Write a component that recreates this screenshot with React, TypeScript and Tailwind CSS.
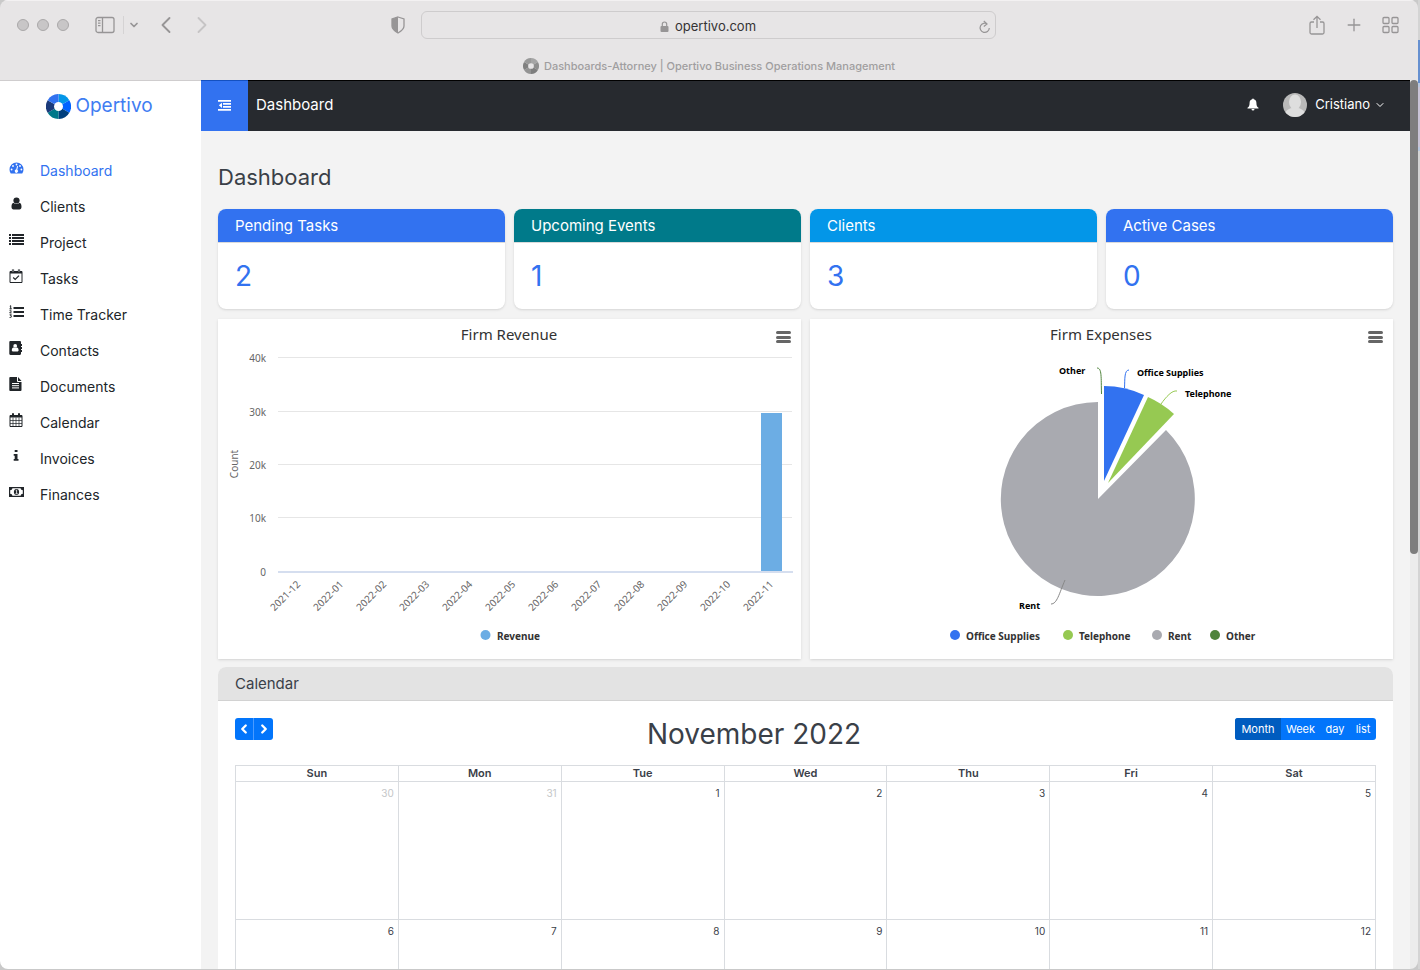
import React from 'react';
import { ChevronDown, ChevronLeft, ChevronRight, Plus } from 'lucide-react';

const BLUE = '#3272f0';

const icons: Record<string, React.ReactNode> = {
  dashboard: (
    <>
      <path fill="currentColor" d="M7.5 1.5a7 7 0 0 0-7 7c0 1.4.4 2.7 1.1 3.800.2.2.3.2.5.2h10.800c.2 0 .4 0 .5-.2.7-1.100 1.100-2.400 1.100-3.800a7 7 0 0 0-7-7z" />
      <g fill="#fff">
        <circle cx="2.600" cy="8.500" r=".9" />
        <circle cx="4" cy="5" r=".9" />
        <circle cx="7.500" cy="3.500" r=".9" />
        <circle cx="11" cy="5" r=".9" />
        <circle cx="12.400" cy="8.500" r=".9" />
        <path d="M8.100 5l1 .2-.8 3.600a1.600 1.600 0 1 1-1.100-.2z" />
      </g>
    </>
  ),
  clients: (
    <g fill="currentColor">
      <circle cx="7.500" cy="3.500" r="3.100" />
      <path d="M4.500 5.700c-1.300.4-2 1.800-2 4.100 0 1.800.8 2.700 2.100 2.700h5.800c1.300 0 2.100-.9 2.100-2.700 0-2.300-.7-3.700-2-4.100a4.100 4.100 0 0 1-6 0z" />
    </g>
  ),
  project: (
    <path fill="currentColor" d="M0 1h2v2H0zM3 1h12v2H3zM0 4h2v2H0zM3 4h12v2H3zM0 7h2v2H0zM3 7h12v2H3zM0 10h2v2H0zM3 10h12v2H3z" />
  ),
  tasks: (
    <g fill="none" stroke="currentColor">
      <path d="M1 2.500h12v11H1z" />
      <path d="M1 3.500h12" strokeWidth="2" />
      <path d="M4 .5v3M10 .5v3" strokeWidth="2.200" />
      <path d="M4 .9v2.200M10 .9v2.200" stroke="#fff" strokeWidth=".6" />
      <path d="M4.200 8.500l2 2 3.800-3.800" strokeWidth="1.200" />
    </g>
  ),
  time: (
    <g fill="none" stroke="currentColor">
      <path d="M4.500 3H15M4.500 7H15M4.500 11H15" strokeWidth="2" />
      <path d="M.8 1.200l.9-.5v3M.5 3.800h2.300M.6 5.600c.8-.6 1.800-.2 1.600.6C2 6.800.8 7.200.7 7.900h1.900M.6 9.800h1.800L1.500 11c1.500 0 1.400 1.900-.9 1.500" strokeWidth="1" />
    </g>
  ),
  contacts: (
    <>
      <path fill="currentColor" d="M1.500 0h9.300c.7 0 1.200.5 1.200 1.200V3h1v2h-1v1h1v2h-1v1h1v2h-1v1.800c0 .7-.5 1.200-1.200 1.200H1.500C.8 14 .3 13.500.3 12.800V1.200C.3.500.8 0 1.500 0z" />
      <circle cx="6.200" cy="4.900" r="1.900" fill="#fff" />
      <path fill="#fff" d="M4.700 6.400c-1.200.2-1.900 1-1.900 3.200 0 .5.300.8.900.8h5c.6 0 .9-.3.900-.8 0-2.200-.7-3-1.900-3.200a2.500 2.500 0 0 1-3 0z" />
    </>
  ),
  documents: (
    <>
      <path fill="currentColor" d="M1.200 0H8v4.200c0 .5.300.8.800.8H12.500v8c0 .6-.3 1-.9 1H1.200c-.6 0-.9-.4-.9-1V1c0-.6.300-1 .9-1zM9 0l3.500 4H9z" />
      <path stroke="#fff" d="M3 6.500h7M3 8.700h7M3 10.900h7" />
    </>
  ),
  calendar: (
    <g fill="none" stroke="currentColor">
      <path d="M1 2.500h12v11H1z" />
      <path d="M1 3.500h12" strokeWidth="2" />
      <path d="M4 .3v3M10 .3v3" strokeWidth="2" />
      <path d="M4 4.500v9M7 4.500v9M10 4.500v9M1 7.500h12M1 10.500h12" strokeWidth=".7" />
    </g>
  ),
  invoices: (
    <path fill="currentColor" d="M5.700 1h2.800v2H5.700zM4.700 5h3.800v5h1v1.800H4.700V10h1V6.700h-1z" />
  ),
  finances: (
    <g fill="none" stroke="currentColor">
      <path d="M.6 2.600h13.800v8.800H.6z" strokeWidth="1.200" />
      <path fill="currentColor" stroke="none" d="M1 3h2.500A2.500 2.500 0 0 1 1 5.300zM14 3h-2.500A2.500 2.500 0 0 0 14 5.300zM1 11h2.500A2.500 2.500 0 0 0 1 8.700zM14 11h-2.500A2.500 2.500 0 0 1 14 8.700z" />
      <ellipse cx="7.500" cy="7" rx="2.600" ry="3" fill="currentColor" stroke="none" />
      <path stroke="#fff" d="M6.800 5.500l.8-.4v3.400M6.500 8.700h2.200" strokeWidth=".8" />
    </g>
  ),
};

const menu = [
  { label: 'Dashboard', icon: 'dashboard', active: true },
  { label: 'Clients', icon: 'clients' },
  { label: 'Project', icon: 'project' },
  { label: 'Tasks', icon: 'tasks' },
  { label: 'Time Tracker', icon: 'time' },
  { label: 'Contacts', icon: 'contacts' },
  { label: 'Documents', icon: 'documents' },
  { label: 'Calendar', icon: 'calendar' },
  { label: 'Invoices', icon: 'invoices' },
  { label: 'Finances', icon: 'finances' },
];

const stats = [
  { label: 'Pending Tasks', value: 2, color: 'bg-[#3272f0]' },
  { label: 'Upcoming Events', value: 1, color: 'bg-[#007a8a]' },
  { label: 'Clients', value: 3, color: 'bg-[#0396e8]' },
  { label: 'Active Cases', value: 0, color: 'bg-[#3272f0]' },
];

const months = ['2021-12', '2022-01', '2022-02', '2022-03', '2022-04', '2022-05', '2022-06', '2022-07', '2022-08', '2022-09', '2022-10', '2022-11'];
const ticks = [
  { label: '40k', y: 39 },
  { label: '30k', y: 93 },
  { label: '20k', y: 146 },
  { label: '10k', y: 199 },
];

const legend = [
  { label: 'Office Supplies', x: 145, color: BLUE },
  { label: 'Telephone', x: 258, color: '#96c952' },
  { label: 'Rent', x: 347, color: '#a9aab0' },
  { label: 'Other', x: 405, color: '#4f843c' },
];

const days = ['Sun', 'Mon', 'Tue', 'Wed', 'Thu', 'Fri', 'Sat'];
const weeks = [
  [30, 31, 1, 2, 3, 4, 5],
  [6, 7, 8, 9, 10, 11, 12],
];

const wheelColors = ['#0396e8', '#0062ff', '#003f7d', '#00788a', '#1b3a7a', '#3272f0'];
const greys = ['#a5a5a5', '#8e8e8e', '#7e7e7e', '#939393', '#808080', '#999'];

const Wheel = ({ size, colors }: { size: number; colors: string[] }) => (
  <svg width={size} height={size} viewBox="0 0 24 24" className="shrink-0">
    {colors.map((color, i) => (
      <path key={color} d="M12 12V0A12 12 0 0 1 22.400 6z" fill={color} transform={`rotate(${i * 60} 12 12)`} />
    ))}
    <circle cx="12" cy="12" r="4.300" fill={size > 20 ? '#fff' : '#e7e5e6'} />
  </svg>
);

const BrowserBar = () => (
  <header className="h-20 shrink-0 border-t border-[#f3f1f2] bg-[#e7e5e6] text-[#979596]">
    <div className="flex h-12 items-center px-[17px]">
      <div className="flex flex-1 items-center">
        <div className="flex gap-2">
          {['close', 'minimize', 'zoom'].map((name) => (
            <button key={name} aria-label={name} className="size-3 rounded-full border border-[#aaa8a9] bg-[#c8c6c7]" />
          ))}
        </div>
        <button aria-label="Sidebar" className="ml-[26px]">
          <svg width="20" height="18" viewBox="0 0 20 18" fill="none" stroke="currentColor" strokeWidth="1.300">
            <rect x="1" y="1.500" width="18" height="15" rx="2" />
            <path d="M7.500 1.500v15M3 4.700h2.500M3 7.200h2.500M3 9.700h2.500" />
          </svg>
        </button>
        <span className="mr-1 ml-2 h-[18px] w-px bg-[#d5d3d4]" />
        <button aria-label="Tab groups"><ChevronDown size={12} strokeWidth={3.5} /></button>
        <button aria-label="Back" className="ml-3"><ChevronLeft size={28} strokeWidth={1.6} /></button>
        <button aria-label="Forward" className="ml-2 text-[#c6c4c5]"><ChevronRight size={28} strokeWidth={1.6} /></button>
        <button aria-label="Privacy report" className="mr-4 ml-auto">
          <svg width="14" height="18" viewBox="0 0 14 18">
            <path d="M7 1l6 2v7c0 3-2.500 5-6 7-3.500-2-6-4-6-7V3z" fill="none" stroke="currentColor" strokeWidth="1.300" />
            <path d="M7 1v16c-3.500-2-6-4-6-7V3z" fill="currentColor" />
          </svg>
        </button>
      </div>
      <div className="flex h-7 w-[575px] items-center rounded-md border border-[#cecccd] px-1">
        <div className="flex flex-1 items-center justify-center gap-[6px] pt-1 pl-4">
          <svg width="9" height="12" viewBox="0 0 9 12">
            <rect x=".5" y="5" width="8" height="6" rx="1" fill="currentColor" />
            <path d="M2.300 5V3.200a2.200 2.200 0 0 1 4.400 0V5" fill="none" stroke="currentColor" strokeWidth="1.200" />
          </svg>
          <input aria-label="Address" defaultValue="opertivo.com" className="w-[84px] bg-transparent text-[13px] text-[#353334] outline-none" />
        </div>
        <button aria-label="Reload" className="pt-1">
          <svg width="13" height="14" viewBox="0 0 13 14" fill="none" stroke="currentColor" strokeWidth="1.200">
            <path d="M9.500 4.200A4.600 4.600 0 1 0 11.300 8M5.800 1l3.200 3-3.200 2.500" />
          </svg>
        </button>
      </div>
      <div className="flex flex-1 items-center justify-end gap-[18px] pr-0.5">
        <button aria-label="Share">
          <svg width="18" height="20" viewBox="0 0 18 20" fill="none" stroke="currentColor" strokeWidth="1.300">
            <path d="M6 7H3.500a1.500 1.500 0 0 0-1.500 1.500v9A1.500 1.500 0 0 0 3.500 19h11a1.500 1.500 0 0 0 1.500-1.500v-9A1.500 1.500 0 0 0 14.500 7H12M9 13V1.500M5.500 4.800L9 1.400l3.500 3.400" />
          </svg>
        </button>
        <button aria-label="New tab"><Plus size={20} strokeWidth={1.6} /></button>
        <button aria-label="Tab overview">
          <svg width="17" height="18" viewBox="0 0 17 18" fill="none" stroke="currentColor" strokeWidth="1.300">
            <rect x="1" y="1.500" width="6" height="6" rx="1" />
            <rect x="10" y="1.500" width="6" height="6" rx="1" />
            <rect x="1" y="10.500" width="6" height="6" rx="1" />
            <rect x="10" y="10.500" width="6" height="6" rx="1" />
          </svg>
        </button>
      </div>
    </div>
    <div className="flex h-[31px] items-center justify-center gap-[5px] pt-[3px] text-[11px] font-medium text-[#a09e9f]">
      <Wheel size={16} colors={greys} />
      <span>Dashboards-Attorney | Opertivo Business Operations Management</span>
    </div>
  </header>
);

const Sidebar = () => (
  <aside className="w-[201px] shrink-0 border-t border-[#cfcdce] bg-white">
    <a href="#" className="flex h-[51px] items-center justify-center gap-1 pr-0.5 text-[19px] text-[#3f7df2]">
      <Wheel size={25} colors={wheelColors} />
      Opertivo
    </a>
    <nav className="mt-5">
      {menu.map((item) => (
        <a
          key={item.label}
          href="#"
          className={`flex h-9 items-center pl-[9px] text-[14px] ${item.active ? 'text-[#3272f0]' : 'text-[#212529]'}`}
        >
          <svg width="15" height="15" viewBox="0 0 15 15" className="mr-4 mb-1 shrink-0">{icons[item.icon]}</svg>
          {item.label}
        </a>
      ))}
    </nav>
  </aside>
);

const TopBar = () => (
  <div className="flex h-[51px] shrink-0 items-stretch border-t border-black bg-[#272a2f] text-white">
    <button aria-label="Toggle menu" className="-mt-px flex w-[47px] items-center justify-center border-t border-[#1450c0] bg-[#3272f0] pb-0.5">
      <svg width="13" height="11" viewBox="0 0 13 11">
        <path fill="currentColor" d="M0 0h13v1.700H0zM5 3h8v1.700H5zM5 6h8v1.700H5zM0 9h13v1.700H0zM4 2.700v5.300L.8 5.350z" />
      </svg>
    </button>
    <span className="flex flex-1 items-center pb-px pl-2 text-[15px]">Dashboard</span>
    <button aria-label="Notifications" className="mr-6 pb-[3px]">
      <svg width="12" height="13" viewBox="0 0 12 13">
        <path fill="currentColor" d="M6 .5c.5 0 .8.3.8.8 1.700.4 2.600 1.800 2.600 3.400 0 2.700.6 4 2.100 5.100v.7H.5v-.7c1.500-1.100 2.100-2.400 2.100-5.100 0-1.600.9-3 2.600-3.400 0-.5.3-.8.8-.8zM4.500 11h3a1.500 1.500 0 0 1-3 0z" />
      </svg>
    </button>
    <button className="mr-6 flex items-center gap-2 pb-[3px] text-[13px]">
      <svg width="24" height="24" viewBox="0 0 24 24">
        <clipPath id="avatar"><circle cx="12" cy="12" r="12" /></clipPath>
        <g clipPath="url(#avatar)">
          <path fill="#b9b9b9" d="M0 0h24v24H0z" />
          <ellipse cx="12" cy="9" rx="6" ry="7.500" fill="#dedede" />
          <path d="M1 24c0-5 4-8.500 8-9h6c4 .5 8 4 8 9z" fill="#dedede" />
        </g>
      </svg>
      <span className="flex items-center gap-1">
        Cristiano
        <ChevronDown size={12} />
      </span>
    </button>
  </div>
);

const StatCard = ({ label, value, color }: { label: string; value: number; color: string }) => (
  <section className="overflow-hidden rounded-lg bg-white shadow-sm">
    <h2 className={`flex h-[33px] items-center px-[17px] pt-0.5 text-[15px] text-white ${color}`}>{label}</h2>
    <p className="flex h-[67px] items-center border-t border-[#dadada] px-[17px] text-[28px] text-[#3272f0]">{value}</p>
  </section>
);

const ChartCard = ({ title, children }: { title: string; children: React.ReactNode }) => (
  <section className="relative bg-white font-['Noto_Sans'] shadow-sm">
    <svg viewBox="0 0 583 340" className="block w-full" role="img" aria-label={title}>
      <text x="291" y="21" textAnchor="middle" fontSize="15" fill="#333">{title}</text>
      {children}
    </svg>
    <button aria-label={`${title} menu`} className="absolute top-3 right-2.5 flex h-3 w-[15px] flex-col justify-between">
      <span className="h-[3px] w-full rounded-full bg-[#666]" />
      <span className="h-[3px] w-full rounded-full bg-[#666]" />
      <span className="h-[3px] w-full rounded-full bg-[#666]" />
    </button>
  </section>
);

const RevenueChart = () => (
  <ChartCard title="Firm Revenue">
    <g fontSize="10" fill="#666">
      {ticks.map((t) => (
        <g key={t.label}>
          <path d={`M60 ${t.y - 0.5}H574`} stroke="#e6e6e6" />
          <text x="48" y={t.y + 4} textAnchor="end">{t.label}</text>
        </g>
      ))}
      <text x="48" y="257" textAnchor="end">0</text>
      <text transform="translate(20 145) rotate(-90)" textAnchor="middle">Count</text>
      <rect x="543" y="94" width="21" height="158" fill="#6cade4" />
      <path d="M60 253H575" stroke="#d5deef" strokeWidth="2" />
      {months.map((month, i) => (
        <text key={month} transform={`translate(${83 + i * 43} 266) rotate(-45)`} textAnchor="end">{month}</text>
      ))}
    </g>
    <circle cx="267.500" cy="316" r="5" fill="#6cade4" />
    <text x="279" y="321" fontSize="10" fontWeight="700" fill="#333">Revenue</text>
  </ChartCard>
);

const ExpensesChart = () => (
  <ChartCard title="Firm Expenses">
    <path d="M288 180L356 111A97 97 0 1 1 288 83z" fill="#a9aab0" />
    <path d="M294 162V67A95 95 0 0 1 334 76z" fill={BLUE} />
    <path d="M298 164L338 78A95 95 0 0 1 364 95z" fill="#96c952" />
    <g fill="none">
      <path d="M287 49C292 49 291 58 291.500 75" stroke="#4f843c" />
      <path d="M319 51C314 51 315 61 314.500 69" stroke={BLUE} />
      <path d="M367 72C362 71 356 78 351 85" stroke="#96c952" />
      <path d="M241 285C247 285 249 275 255 261" stroke="#888" />
    </g>
    <g fontSize="9" fontWeight="700" fill="#000">
      <text x="249" y="55">Other</text>
      <text x="327" y="57">Office Supplies</text>
      <text x="375" y="78">Telephone</text>
      <text x="209" y="290">Rent</text>
    </g>
    {legend.map((item) => (
      <g key={item.label}>
        <circle cx={item.x} cy="316" r="5" fill={item.color} />
        <text x={item.x + 11} y="321" fontSize="10" fontWeight="700" fill="#333">{item.label}</text>
      </g>
    ))}
  </ChartCard>
);

const CalendarCard = () => (
  <section className="mt-2 overflow-hidden rounded-t-lg bg-white text-[#3a4048]">
    <h2 className="flex h-[34px] items-center border-b border-[#d2d2d2] bg-[#e3e3e3] px-[17px] pt-0.5 text-[15px]">Calendar</h2>
    <div className="p-[17px]">
      <div className="flex h-8 items-start justify-between">
        <div className="flex h-[22px] overflow-hidden rounded-[3px] bg-[#0275fb] text-white">
          <button aria-label="Previous" className="flex w-[19px] items-center justify-center border-r border-[#4a9bff]">
            <ChevronLeft size={14} strokeWidth={4} />
          </button>
          <button aria-label="Next" className="flex w-[19px] items-center justify-center">
            <ChevronRight size={14} strokeWidth={4} />
          </button>
        </div>
        <h3 className="text-[28px] leading-8">November 2022</h3>
        <div className="flex h-[22px] overflow-hidden rounded-[3px] bg-[#0275fb] text-[11px] text-white">
          <button className="w-[46px] bg-[#005cbf]">Month</button>
          <button className="w-[39px]">Week</button>
          <button className="w-[30px]">day</button>
          <button className="w-[26px]">list</button>
        </div>
      </div>
      <table className="mt-[15px] w-full table-fixed border-collapse text-[10px]">
        <thead>
          <tr className="h-4">
            {days.map((day) => (
              <th key={day} className="border border-[#d9dce0] p-0 text-[11px] leading-[15px] font-semibold">{day}</th>
            ))}
          </tr>
        </thead>
        <tbody>
          {weeks.map((week) => (
            <tr key={week[0]} className="h-[138px]">
              {week.map((day) => (
                <td key={day} className={`border border-[#d9dce0] px-1 py-1 text-right align-top ${day > 29 ? 'text-[#c4c6c8]' : ''}`}>{day}</td>
              ))}
            </tr>
          ))}
        </tbody>
      </table>
    </div>
  </section>
);

export default function App() {
  return (
    <div className="flex h-screen overflow-hidden bg-[#c9c9c9] pb-px font-['Inter',sans-serif]">
      <div className="flex min-w-0 flex-1 flex-col overflow-hidden rounded-lg">
        <BrowserBar />
        <div className="flex min-h-0 flex-1">
          <Sidebar />
          <div className="flex min-w-0 flex-1 flex-col bg-[#f3f3f3]">
            <TopBar />
            <main className="min-h-0 flex-1 overflow-hidden px-[17px] pt-8">
              <h1 className="text-[22px] leading-7 text-[#3a3f47]">Dashboard</h1>
              <div className="mt-[18px] grid grid-cols-4 gap-[9px]">
                {stats.map((s) => (
                  <StatCard key={s.label} {...s} />
                ))}
              </div>
              <div className="mt-[10px] grid grid-cols-2 gap-[9px]">
                <RevenueChart />
                <ExpensesChart />
              </div>
              <CalendarCard />
            </main>
          </div>
          <div className="w-2 shrink-0 bg-[#ececec]">
            <div className="h-[474px] rounded-full bg-[#7e7e7e]" />
          </div>
        </div>
      </div>
      <div className="flex w-0.5 shrink-0 flex-col bg-[#d4d4d4]">
        <span className="mt-10 h-[43px] bg-[#6690d0]" />
        <span className="h-[68px] border-y-4 border-[#b8c8e0] bg-[#c9c4d6]" />
      </div>
    </div>
  );
}
